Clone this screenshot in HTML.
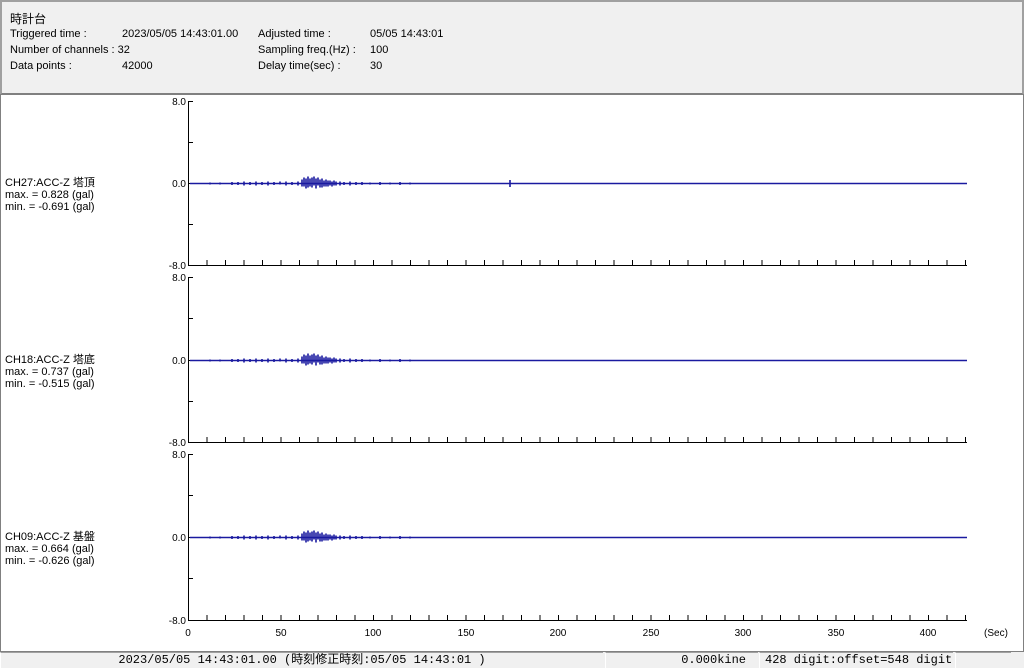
<!DOCTYPE html><html><head><meta charset="utf-8"><style>
body{margin:0;width:1024px;height:667px;overflow:hidden;background:#f0f0f0;font-family:"Liberation Sans","Noto Sans CJK JP",sans-serif;}
.hdr{position:absolute;left:0;top:0;width:1020px;height:91px;border:2px solid #a0a0a0;border-bottom-color:#808080;background:#f0f0f0;font-size:11px;color:#000}
.hdr div{position:absolute;white-space:nowrap}
.plot{position:absolute;left:0;top:94px;width:1022px;height:556px;background:#fff;border:1px solid #808080}
.sb{position:absolute;top:652px;height:15px;border-top:1px solid #a0a0a0;border-left:1px solid #fff;background:#f0f0f0;font-family:"Liberation Mono","Noto Sans CJK JP",monospace;font-size:12px;line-height:15px;white-space:nowrap;overflow:hidden}
.lbl{position:absolute;font-size:11px;line-height:12px;white-space:nowrap}
</style></head><body>
<div class="hdr">
<div style="left:8px;top:8px;font-size:12px">時計台</div>
<div style="left:8px;top:26px">Triggered time :</div>
<div style="left:120px;top:26px">2023/05/05 14:43:01.00</div>
<div style="left:256px;top:26px">Adjusted time :</div>
<div style="left:368px;top:26px">05/05 14:43:01</div>
<div style="left:8px;top:42px">Number of channels : 32</div>
<div style="left:256px;top:42px">Sampling freq.(Hz) :</div>
<div style="left:368px;top:42px">100</div>
<div style="left:8px;top:58px">Data points :</div>
<div style="left:120px;top:58px">42000</div>
<div style="left:256px;top:58px">Delay time(sec) :</div>
<div style="left:368px;top:58px">30</div>
</div>
<div class="plot"></div>
<svg style="position:absolute;left:0;top:0" width="1024" height="667" font-family="Liberation Sans" font-size="10">
<defs>
<pattern id="tk" x="188" y="0" width="18.5" height="667" patternUnits="userSpaceOnUse"><line x1="0.5" y1="0" x2="0.5" y2="667" stroke="#000"/></pattern>
<path id="w" d="M190 0H967M210 -1v2M220 -1v2M232 -1.5v3M238 -1.5v3M244 -2v4M250 -1.5v3M256 -2v4M262 -1.5v3M268 -2v4M274 -1.5v3M280 -2v3M286 -2v4M292 -1.5v3M298 -2v4M302 -4v7M304 -6v9M306 -5v10M308 -7v11M310 -5v8M312 -6v10M314 -7v9M316 -5v10M318 -6v8M320 -4v8M322 -5v9M324 -3v6M326 -4v7M328 -3v6M330 -3v5M332 -2v5M334 -3v5M336 -2v4M340 -2v4M344 -1.5v3M350 -2v4M356 -1.5v3M362 -1.5v3M370 -1v2M380 -1.5v3M390 -1v2M400 -1.5v3M410 -1v2"/>
</defs>
<g stroke="#000" fill="none">
<path d="M188.5 101V265.5H967M188.5 277V442.5H967M188.5 454V620.5H967"/>
<path d="M188 101.5h5M188 142.5h5M188 183.5h5M188 224.5h5M188 277.5h5M188 318.5h5M188 360.5h5M188 401.5h5M188 454.5h5M188 495.5h5M188 537.5h5M188 578.5h5"/>
</g>
<rect x="188" y="260" width="780" height="5" fill="url(#tk)"/>
<rect x="188" y="437" width="780" height="5" fill="url(#tk)"/>
<rect x="188" y="615" width="780" height="5" fill="url(#tk)"/>
<g stroke="#1a1aa0" fill="none" stroke-width="1.6">
<use href="#w" y="183.5"/><use href="#w" y="360.5"/><use href="#w" y="537.5"/>
<path d="M510 180v7" />
</g>
<g text-anchor="end">
<text x="186" y="105">8.0</text><text x="186" y="187">0.0</text><text x="186" y="269">-8.0</text>
<text x="186" y="281">8.0</text><text x="186" y="364">0.0</text><text x="186" y="446">-8.0</text>
<text x="186" y="458">8.0</text><text x="186" y="541">0.0</text><text x="186" y="624">-8.0</text>
</g>
<g text-anchor="middle">
<text x="188" y="636">0</text><text x="281" y="636">50</text><text x="373" y="636">100</text><text x="466" y="636">150</text><text x="558" y="636">200</text><text x="651" y="636">250</text><text x="743" y="636">300</text><text x="836" y="636">350</text><text x="928" y="636">400</text><text x="996" y="636">(Sec)</text>
</g>
</svg>
<div class="lbl" style="left:5px;top:177px">CH27:ACC-Z 塔頂<br>max. = 0.828 (gal)<br>min. = -0.691 (gal)</div>
<div class="lbl" style="left:5px;top:354px">CH18:ACC-Z 塔底<br>max. = 0.737 (gal)<br>min. = -0.515 (gal)</div>
<div class="lbl" style="left:5px;top:531px">CH09:ACC-Z 基盤<br>max. = 0.664 (gal)<br>min. = -0.626 (gal)</div>
<div class="sb" style="left:0;width:602px;text-align:center">2023/05/05 14:43:01.00 (時刻修正時刻:05/05 14:43:01 )</div>
<div class="sb" style="left:605px;width:140px;text-align:right;padding-right:12px">0.000kine</div>
<div class="sb" style="left:759px;width:188px;padding-left:5px">428 digit:offset=548 digit</div>
<div class="sb" style="left:955px;width:55px"></div>
</body></html>
